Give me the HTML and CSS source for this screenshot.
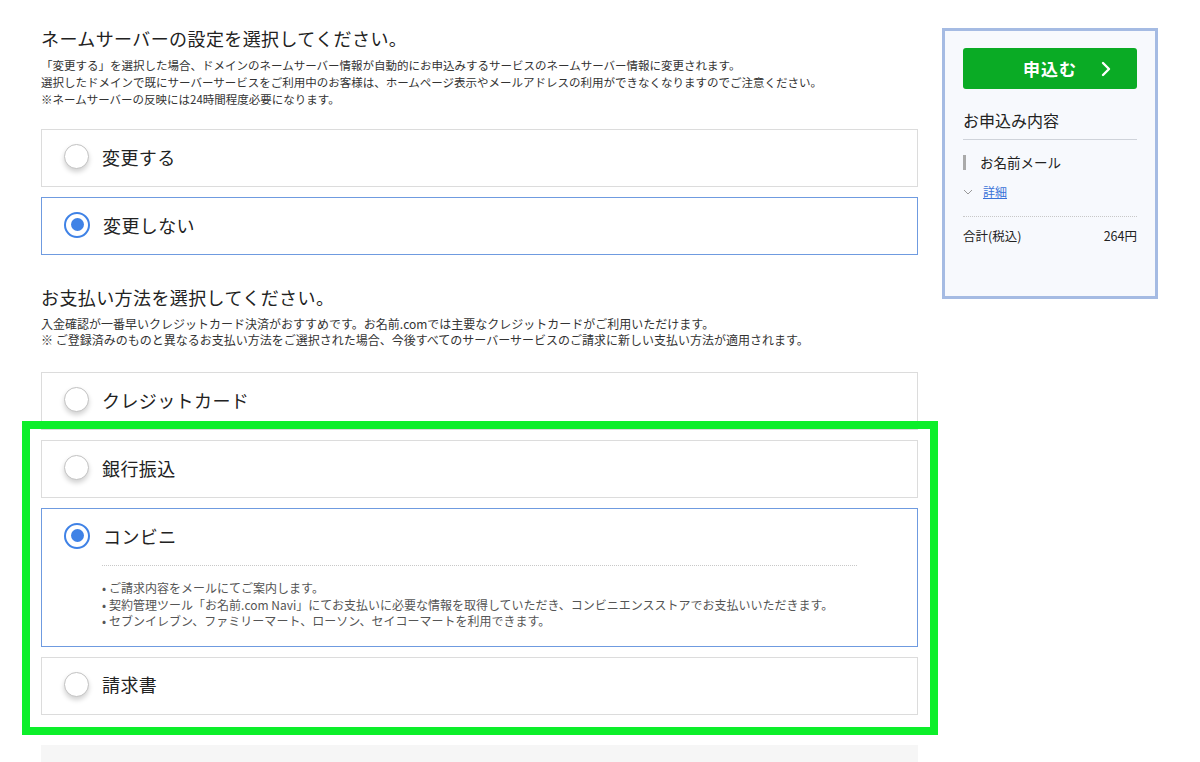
FILE: index.html
```html
<!DOCTYPE html>
<html lang="ja">
<head>
  <meta charset="UTF-8" />
  <title>お申込み</title>
  <link rel="stylesheet" href="styles.css">
</head>
<body>
  <div class="page">
    <main class="main">
      <section class="section">
        <h2 class="title">ネームサーバーの設定を選択してください。</h2>
        <p class="lead">「変更する」を選択した場合、ドメインのネームサーバー情報が自動的にお申込みするサービスのネームサーバー情報に変更されます。<br>選択したドメインで既にサーバーサービスをご利用中のお客様は、ホームページ表示やメールアドレスの利用ができなくなりますのでご注意ください。<br>※ネームサーバーの反映には24時間程度必要になります。</p>
        <div class="options">
          <div class="option"><div class="option-head"><span class="radio"></span><span class="option-label">変更する</span></div></div>
          <div class="option selected"><div class="option-head"><span class="radio"></span><span class="option-label">変更しない</span></div></div>
        </div>
      </section>

      <section class="section pay">
        <h2 class="title">お支払い方法を選択してください。</h2>
        <p class="lead small">入金確認が一番早いクレジットカード決済がおすすめです。お名前.comでは主要なクレジットカードがご利用いただけます。<br>※ ご登録済みのものと異なるお支払い方法をご選択された場合、今後すべてのサーバーサービスのご請求に新しい支払い方法が適用されます。</p>
        <div class="options">
          <div class="option"><div class="option-head"><span class="radio"></span><span class="option-label">クレジットカード</span></div></div>
          <div class="option"><div class="option-head"><span class="radio"></span><span class="option-label">銀行振込</span></div></div>
          <div class="option selected">
            <div class="option-head"><span class="radio"></span><span class="option-label">コンビニ</span></div>
            <ul class="option-note">
              <li>ご請求内容をメールにてご案内します。</li>
              <li>契約管理ツール「お名前.com Navi」にてお支払いに必要な情報を取得していただき、コンビニエンスストアでお支払いいただきます。</li>
              <li>セブンイレブン、ファミリーマート、ローソン、セイコーマートを利用できます。</li>
            </ul>
          </div>
          <div class="option"><div class="option-head"><span class="radio"></span><span class="option-label">請求書</span></div></div>
        </div>
      </section>

      <div class="next-block"></div>
    </main>

    <aside class="side">
      <button class="apply-btn">申込む
        <svg class="apply-arrow" width="10" height="16" viewBox="0 0 10 16"><polyline points="2,2 8,8 2,14" fill="none" stroke="#fff" stroke-width="2.4" stroke-linecap="round" stroke-linejoin="round"/></svg>
      </button>
      <h3 class="side-title">お申込み内容</h3>
      <div class="side-item">お名前メール</div>
      <div class="side-detail">
        <svg width="10" height="6" viewBox="0 0 10 6"><polyline points="1,1 5,5 9,1" fill="none" stroke="#999" stroke-width="1"/></svg>
        <a href="#">詳細</a>
      </div>
      <div class="side-total"><span>合計(税込)</span><span>264円</span></div>
    </aside>

    <div class="highlight"></div>
  </div>
</body>
</html>
```

FILE: styles.css
```css
body {
  margin: 0;
  font-family: "Noto Sans CJK JP", "Liberation Sans", sans-serif;
  color: #222;
  background: #fff;
}
.page {
  position: relative;
  display: flex;
  align-items: flex-start;
  gap: 24px;
  padding: 26px 0 0 41px;
  height: 736px;
  overflow: hidden;
}
.main {
  width: 877px;
  flex-shrink: 0;
}
.title {
  margin: 0;
  font-size: 18px;
  font-weight: normal;
  line-height: 24px;
  letter-spacing: 0.4px;
}
.lead {
  margin: 7px 0 21px;
  font-size: 11.5px;
  line-height: 17px;
  color: #333;
}
.lead.small {
  font-size: 12px;
  line-height: 16px;
  margin-bottom: 24px;
}
.pay {
  margin-top: 30px;
}
.options {
  display: flex;
  flex-direction: column;
  gap: 10px;
}
.option {
  border: 1px solid #dcdcdc;
  background: #fff;
}
.option.selected {
  border-color: #6f9be0;
}
.option-head {
  display: flex;
  align-items: center;
  height: 53px;
  padding: 0 0 3px 22px;
}
.radio {
  width: 23px;
  height: 23px;
  border: 1.5px solid #c2c2c2;
  border-radius: 50%;
  background: #fff;
  box-shadow: 0 3px 5px rgba(0, 0, 0, 0.18);
  margin-right: 13px;
  flex-shrink: 0;
  position: relative;
}
.selected .radio {
  width: 22px;
  height: 22px;
  border: 2.5px solid #3f82e6;
  box-shadow: none;
}
.selected .radio::after {
  content: "";
  position: absolute;
  left: 4.5px;
  top: 4.5px;
  width: 13px;
  height: 13px;
  border-radius: 50%;
  background: #3f82e6;
}
.option-label {
  font-size: 18px;
  letter-spacing: 0.4px;
}
.option-note {
  list-style: none;
  margin: 0 60px 0 60px;
  padding: 14px 0 16px;
  border-top: 1px dotted #c8c8c8;
  font-size: 12px;
  line-height: 16.5px;
  color: #555;
}
.option-note li::before {
  content: "•";
  margin-right: 3px;
}
.next-block {
  margin-top: 30px;
  height: 40px;
  background: #f6f6f6;
}
.side {
  width: 174px;
  margin-top: 2px;
  padding: 17px 18px 51px;
  border: 3px solid #a5bbe3;
  background: #f7f9fd;
  flex-shrink: 0;
}
.apply-btn {
  position: relative;
  display: block;
  width: 100%;
  height: 41px;
  border: none;
  border-radius: 3px;
  background: #0aab25;
  color: #fff;
  font-family: inherit;
  font-size: 17px;
  font-weight: bold;
  letter-spacing: 1px;
  cursor: pointer;
}
.apply-arrow {
  position: absolute;
  right: 26px;
  top: 13px;
}
.side-title {
  margin: 20px 0 0;
  padding-bottom: 8px;
  border-bottom: 1px solid #cfd3da;
  font-size: 16px;
  font-weight: normal;
  line-height: 22px;
}
.side-item {
  margin-top: 15px;
  padding-left: 14px;
  border-left: 3px solid #aaa;
  font-size: 13.5px;
  line-height: 15px;
}
.side-detail {
  display: flex;
  align-items: center;
  gap: 10px;
  margin-top: 14px;
  padding: 0 0 16px 0;
  border-bottom: 1px dotted #c8c8c8;
  font-size: 12px;
  line-height: 16px;
}
.side-detail a {
  color: #3a72d8;
}
.side-total {
  display: flex;
  justify-content: space-between;
  margin-top: 10px;
  font-size: 12.5px;
  line-height: 18px;
}
.highlight {
  position: absolute;
  left: 22px;
  top: 421px;
  width: 900px;
  height: 298px;
  border: 8px solid #0cef2a;
  pointer-events: none;
}
```
